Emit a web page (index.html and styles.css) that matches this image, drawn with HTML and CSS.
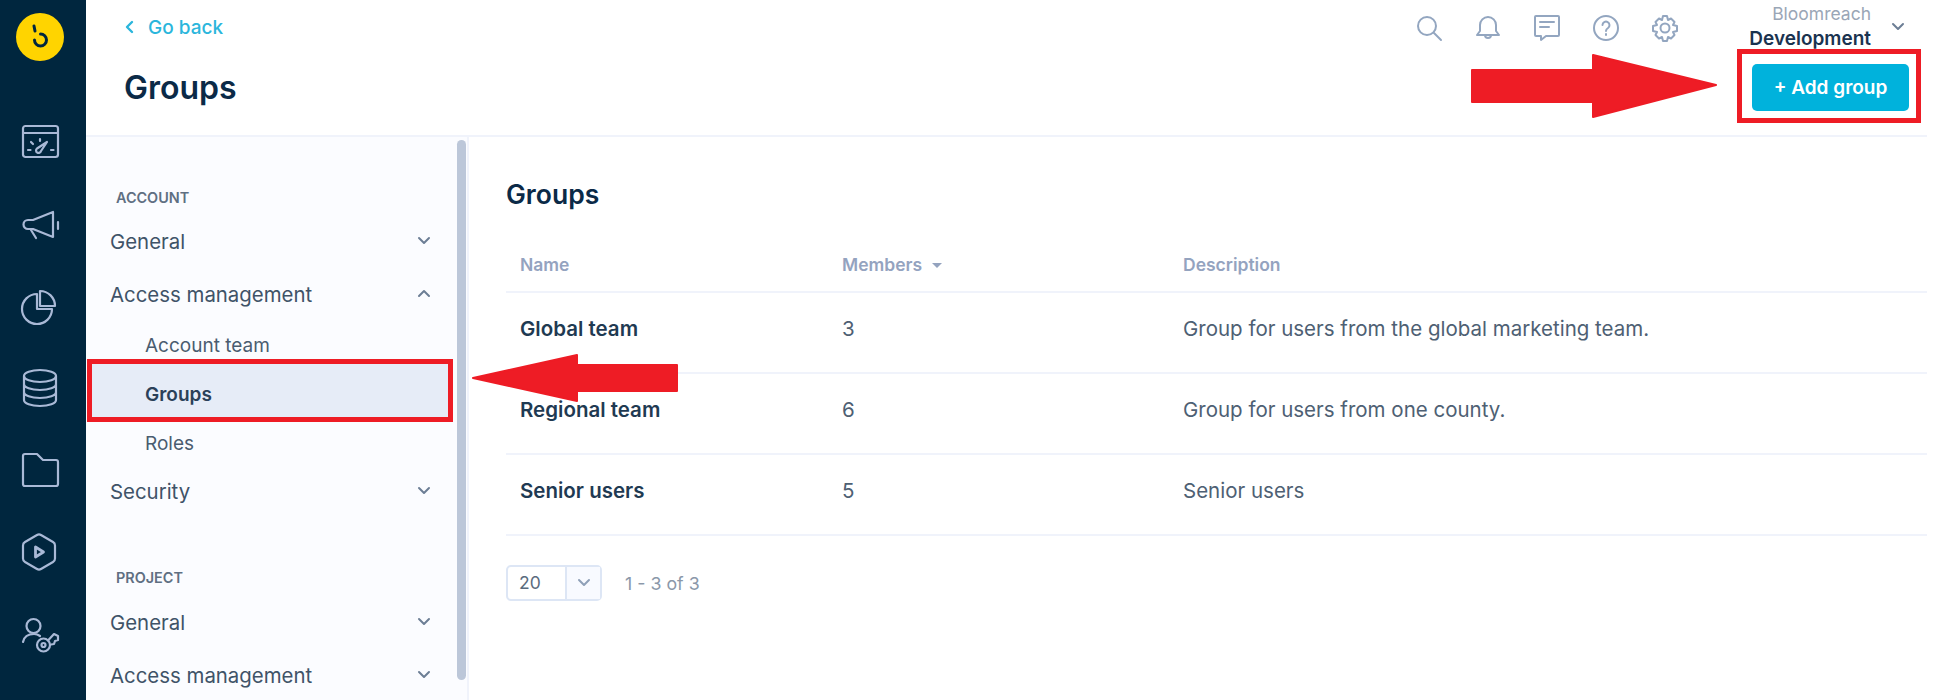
FILE: index.html
```html
<!DOCTYPE html>
<html>
<head>
    <title>Groups</title>
    <link rel="stylesheet" href="styles.css">
</head>
<body>
    <div class="app">
        <nav class="rail">
            <svg class="logo" viewBox="0 0 48 48"><circle cx="24" cy="24" r="24" fill="#ffd400"/><path d="M18 13l1 5M24.500 21a6 6 0 1 1 -6 6" fill="none" stroke="#00263e" stroke-width="3" stroke-linecap="round"/></svg>
            <svg class="rail-icon" viewBox="0 0 40 40"><rect x="3" y="4" width="35" height="31" rx="2.500"/><path d="M3 11h35M8 28h2.500M31 28h2.500M11 20l2 2M20 17v2M27 20l-6 9a2.500 2.500 0 1 1 -4 -2.500l10 -6.500z"/></svg>
            <svg class="rail-icon" viewBox="0 0 40 40"><path d="M33 8v25L13 25H8a4.500 4.500 0 0 1 0 -9h5zM11 26l5 8M38 18v7"/></svg>
            <svg class="rail-icon" viewBox="0 0 40 40"><path d="M17 8A15 15 0 1 0 32 23H17zM20 5a15 15 0 0 1 15 15H20z"/></svg>
            <svg class="rail-icon" viewBox="0 0 40 40"><ellipse cx="20" cy="8" rx="16" ry="6"/><path d="M4 8v24c0 3.500 7 6 16 6s16 -2.500 16 -6V8M4 16c0 3.500 7 6 16 6s16 -2.500 16 -6M4 24c0 3.500 7 6 16 6s16 -2.500 16 -6"/></svg>
            <svg class="rail-icon" viewBox="0 0 40 40"><path d="M3 6a2 2 0 0 1 2 -2h12l6 6h13a2 2 0 0 1 2 2v22a2 2 0 0 1 -2 2H5a2 2 0 0 1 -2 -2z"/></svg>
            <svg class="rail-icon" viewBox="0 0 40 40"><path d="M17 3a4 4 0 0 1 4 0l12 7a4 4 0 0 1 2 3.500v13a4 4 0 0 1 -2 3.500l-12 7a4 4 0 0 1 -4 0l-12 -7a4 4 0 0 1 -2 -3.500v-13a4 4 0 0 1 2 -3.500z"/><path class="play" d="M15.500 15v10l8 -5z"/></svg>
            <svg class="rail-icon" viewBox="0 0 40 40"><circle cx="13.500" cy="12" r="7"/><path d="M3 28c1 -5 5 -8 11 -8 2 0 4 .5 6 2"/><circle cx="23.500" cy="31" r="6.500"/><circle cx="23.500" cy="31" r="2"/><path d="M28 26.500l6 -6.500 4 2v4l-3 1-1 3-3 .5"/></svg>
        </nav>

        <div class="content">
            <header class="top">
                <div class="top-left">
                    <a class="back"><svg class="back-icon" viewBox="0 0 10 14"><path d="M8 2L3 7l5 5"/></svg>Go back</a>
                    <h1 class="page-title">Groups</h1>
                </div>
                <div class="top-right">
                    <div class="tools">
                        <svg class="tool" viewBox="0 0 28 28"><circle cx="12" cy="12" r="9"/><path d="M19 19l7 7"/></svg>
                        <svg class="tool" viewBox="0 0 28 28"><path d="M14 3a8 8 0 0 0 -8 8v6l-3 4h22l-3 -4v-6a8 8 0 0 0 -8 -8zM11 21a3 3 0 0 0 6 0"/></svg>
                        <svg class="tool" viewBox="0 0 28 28"><path d="M3 2h22a1 1 0 0 1 1 1v18a1 1 0 0 1 -1 1H13l-5 4v-4H3a1 1 0 0 1 -1 -1V3a1 1 0 0 1 1 -1zM7 8h14M7 13h9"/></svg>
                        <svg class="tool" viewBox="0 0 28 28"><circle cx="14" cy="14" r="12"/><path d="M10.500 11a3.500 3.500 0 1 1 5.500 3c-1.300 .8 -2 1.500 -2 3M14 20v1"/></svg>
                        <svg class="tool" viewBox="0 0 28 28"><circle cx="14" cy="14" r="4.500"/><path d="M12 2h4l1 4 3 -1.500 3.500 3.500-1.500 3 4 1v5l-4 1 1.500 3-3.500 3.500-3 -1.500-1 4h-4l-1 -4-3 1.500-3.500 -3.500 1.500 -3-4 -1v-5l4 -1-1.500 -3 3.500 -3.500 3 1.500z"/></svg>
                    </div>
                    <div class="org">
                        <div class="org-names">
                            <span class="org-name">Bloomreach</span>
                            <span class="org-project">Development</span>
                        </div>
                        <svg class="chevron org-chevron" viewBox="0 0 14 10"><path d="M2 2l5 5 5 -5"/></svg>
                    </div>
                    <button class="add-btn" type="button">+ Add group</button>
                </div>
            </header>

            <div class="body">
                <aside class="sidebar">
                    <div class="side-label">ACCOUNT</div>
                    <div class="side-item">General<svg class="chevron" viewBox="0 0 14 10"><path d="M2 2l5 5 5 -5"/></svg></div>
                    <div class="side-item side-open">Access management<svg class="chevron" viewBox="0 0 14 10"><path d="M2 7l5 -5 5 5"/></svg></div>
                    <div class="side-sub">Account team</div>
                    <div class="side-sub side-active">Groups</div>
                    <div class="side-sub">Roles</div>
                    <div class="side-item">Security<svg class="chevron" viewBox="0 0 14 10"><path d="M2 2l5 5 5 -5"/></svg></div>
                    <div class="side-label side-label-next">PROJECT</div>
                    <div class="side-item">General<svg class="chevron" viewBox="0 0 14 10"><path d="M2 2l5 5 5 -5"/></svg></div>
                    <div class="side-item side-open">Access management<svg class="chevron" viewBox="0 0 14 10"><path d="M2 2l5 5 5 -5"/></svg></div>
                    <div class="scroll-thumb"></div>
                </aside>

                <main class="main">
                    <h2 class="main-title">Groups</h2>
                    <table class="groups">
                        <thead>
                            <tr>
                                <th class="col-name">Name</th>
                                <th class="col-members">Members<span class="sort"></span></th>
                                <th>Description</th>
                            </tr>
                        </thead>
                        <tbody>
                            <tr>
                                <td class="group-name">Global team</td>
                                <td>3</td>
                                <td>Group for users from the global marketing team.</td>
                            </tr>
                            <tr>
                                <td class="group-name">Regional team</td>
                                <td>6</td>
                                <td>Group for users from one county.</td>
                            </tr>
                            <tr>
                                <td class="group-name">Senior users</td>
                                <td>5</td>
                                <td>Senior users</td>
                            </tr>
                        </tbody>
                    </table>
                    <div class="pager">
                        <div class="page-size">
                            <span class="page-value">20</span>
                            <span class="page-toggle"><svg class="chevron chevron-light" viewBox="0 0 14 10"><path d="M2 2l5 5 5 -5"/></svg></span>
                        </div>
                        <span class="page-count">1 - 3 of 3</span>
                    </div>
                </main>
            </div>
        </div>

        <svg class="arrow arrow-right" viewBox="0 0 250 66"><path d="M2 17H123V2L246 32 123 64V49H2z"/></svg>
        <svg class="arrow arrow-left" viewBox="0 0 208 50"><path d="M206 12H106V2L2 25 106 48V38H206z"/></svg>
    </div>
</body>
</html>
```

FILE: styles.css
```css
* {
    box-sizing: border-box;
}
html, body {
    margin: 0;
    height: 100%;
    background: white;
    overflow: hidden;
}
body {
    font-family: Inter, "Liberation Sans", sans-serif;
    color: #0f2a44;
}
.app {
    position: relative;
    display: flex;
    width: 1944px;
    height: 700px;
    overflow: hidden;
}

/* left rail */
.rail {
    width: 86px;
    height: 700px;
    flex: none;
    background: #00263e;
    display: flex;
    flex-direction: column;
    align-items: center;
    padding: 13px 7px 0 0;
    gap: 42px;
}
.logo {
    width: 48px;
    height: 48px;
    margin-bottom: 19px;
    flex: none;
}
.rail-icon {
    width: 40px;
    height: 40px;
    flex: none;
    fill: none;
    stroke: #a9b9d6;
    stroke-width: 2.2;
    stroke-linecap: round;
    stroke-linejoin: round;
}
.play {
    stroke-width: 2.800;
}

/* header */
.content {
    width: 1841px;
    display: flex;
    flex-direction: column;
}
.top {
    height: 137px;
    flex: none;
    display: flex;
    justify-content: space-between;
    padding: 0 18px 0 38px;
    border-bottom: 2px solid #f0f3fb;
}
.back {
    display: flex;
    align-items: center;
    height: 20px;
    margin-top: 17px;
    font-size: 19px;
    font-weight: 500;
    color: #2bb6dc;
}
.back-icon {
    width: 10px;
    height: 14px;
    margin-right: 14px;
    fill: none;
    stroke: #2bb6dc;
    stroke-width: 2.4;
    stroke-linecap: round;
    stroke-linejoin: round;
}
.page-title {
    margin: 32px 0 0;
    font-size: 32px;
    line-height: 38px;
    font-weight: 600;
    color: #0b2a47;
}
.top-right {
    width: 505px;
    display: flex;
    flex-wrap: wrap;
    align-items: flex-start;
    justify-content: flex-end;
    position: relative;
}
.tools {
    display: flex;
    gap: 31px;
    margin: 14px 72px 0 0;
}
.tool {
    width: 28px;
    height: 28px;
    fill: none;
    stroke: #93a6c0;
    stroke-width: 2;
    stroke-linecap: round;
    stroke-linejoin: round;
}
.org {
    display: flex;
    width: 176px;
    margin-right: -18px;
    padding-right: 23px;
    height: 64px;
}
.org-names {
    display: flex;
    flex-direction: column;
    align-items: flex-end;
    padding-top: 3px;
    width: 120px;
    flex: none;
    white-space: nowrap;
}
.org-name {
    font-size: 17.500px;
    line-height: 22px;
    color: #9aa6b6;
}
.org-project {
    font-size: 19px;
    line-height: 28px;
    font-weight: 600;
    color: #1a3350;
}
.org-chevron {
    margin: 22px 0 0 20px;
}
.add-btn {
    width: 157px;
    height: 47px;
    border: 0;
    border-radius: 5px;
    background: #00b2dc;
    color: white;
    font-family: Inter, "Liberation Sans", sans-serif;
    font-size: 19px;
    font-weight: 600;
    position: absolute;
    right: 0;
    top: 64px;
}
.add-btn::after {
    content: "";
    position: absolute;
    inset: -15px -12px -12px -15px;
    border: 5px solid #ee1c25;
}
.chevron {
    width: 14px;
    height: 10px;
    flex: none;
    fill: none;
    stroke: #6c7e95;
    stroke-width: 2;
    stroke-linecap: round;
    stroke-linejoin: round;
}
.chevron-light {
    stroke: #8fa0b8;
}

/* sidebar */
.body {
    flex: 1;
    display: flex;
    min-height: 0;
}
.sidebar {
    position: relative;
    isolation: isolate;
    width: 383px;
    flex: none;
    background: #fbfcff;
    border-right: 2px solid #f0f3fb;
    padding-top: 51px;
}
.side-label {
    height: 20px;
    line-height: 20px;
    padding-left: 30px;
    margin-bottom: 10px;
    font-size: 14.400px;
    font-weight: 600;
    color: #5f6f82;
}
.side-label:first-child {
    margin-bottom: 9px;
}
.side-label-next {
    margin-top: 51px;
}
.side-item, .side-sub {
    width: 367px;
    display: flex;
    align-items: center;
    justify-content: space-between;
    font-size: 20.400px;
    color: #3f5368;
}
.side-item {
    height: 50px;
    padding: 0 22px 2px 24px;
}
.side-open {
    margin-top: 3px;
}
.side-sub {
    height: 49px;
    padding: 2px 22px 0 59px;
    font-size: 19px;
    color: #4a5c70;
}
.side-active {
    position: relative;
    font-weight: 600;
    color: #2a4059;
}
.side-active::before {
    content: "";
    position: absolute;
    z-index: -1;
    inset: -10px 0 -4px 1px;
    background: #e6ecf7;
    border: 5px solid #ee1c25;
}
.scroll-thumb {
    position: absolute;
    top: 3px;
    left: 371px;
    width: 9px;
    height: 540px;
    border-radius: 5px;
    background: #bcc7d9;
}

/* table */
.main {
    flex: 1;
    padding: 40px 0 0 37px;
}
.main-title {
    margin: 0 0 26px;
    font-size: 26.500px;
    line-height: 34px;
    font-weight: 600;
    color: #0b2a47;
}
.groups {
    width: 100%;
    border-collapse: collapse;
    table-layout: fixed;
}
.groups th {
    height: 55px;
    padding: 0 14px;
    text-align: left;
    font-size: 17.500px;
    font-weight: 600;
    color: #94a3bf;
    border-bottom: 2px solid #f0f3fb;
}
.col-name {
    width: 322px;
}
.col-members {
    width: 341px;
}
.sort {
    display: inline-block;
    margin: 0 0 3px 10px;
    border: 5px solid transparent;
    border-top-color: #94a3bf;
    border-bottom: 0;
}
.groups td {
    height: 81px;
    padding: 0 14px 9px;
    font-size: 20.500px;
    color: #4e6073;
    border-bottom: 2px solid #f0f3fb;
}
.groups .group-name {
    font-weight: 600;
    color: #1f3a52;
}
.pager {
    display: flex;
    align-items: center;
    margin-top: 29px;
    gap: 23px;
}
.page-size {
    width: 96px;
    height: 36px;
    display: flex;
    border: 2px solid #dde6f5;
    border-radius: 5px;
}
.page-value {
    width: 59px;
    padding-left: 11px;
    line-height: 32px;
    font-size: 17.500px;
    color: #5a6b7e;
    border-right: 2px solid #dde6f5;
}
.page-toggle {
    flex: 1;
    display: flex;
    align-items: center;
    justify-content: center;
    background: #f8faff;
}
.page-count {
    font-size: 17.800px;
    color: #8b98a9;
}

/* annotation arrows over the screenshot */
.arrow {
    position: absolute;
    fill: #ee1c25;
    stroke: #ee1c25;
    stroke-width: 2;
    stroke-linejoin: round;
}
.arrow-right {
    left: 1470px;
    top: 53px;
    width: 250px;
    height: 66px;
}
.arrow-left {
    left: 471px;
    top: 353px;
    width: 208px;
    height: 50px;
}
```
